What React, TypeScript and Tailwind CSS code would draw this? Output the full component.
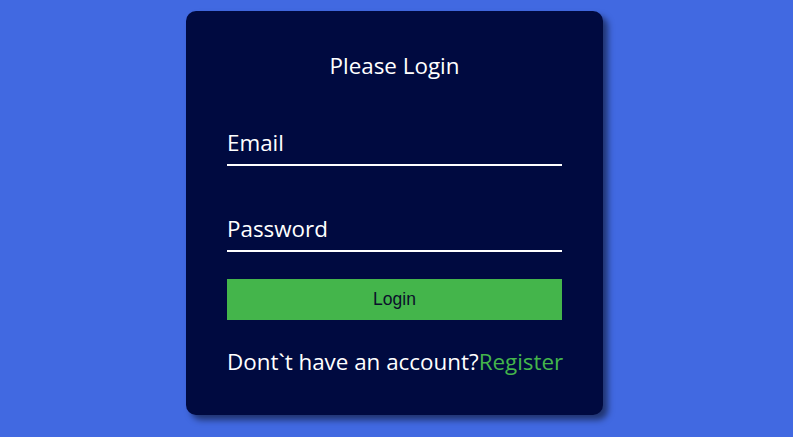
import React from "react";

export default function App() {
  return (
    <div
      className="min-h-screen w-full bg-[#4169e1] flex justify-center pr-[4px] pt-[11px]"
      style={{ fontFamily: '"Open Sans", "Noto Sans", sans-serif' }}
    >
      <div className="w-[417px] h-[404px] bg-[#000a40] rounded-[10px] shadow-[5px_5px_6px_rgba(0,0,0,0.5)] px-[41px] pt-[40px] flex flex-col">
        <h2 className="text-center text-white text-[22.4px] leading-[30px] font-normal">Please Login</h2>
        <div className="mt-[47px] border-b-2 border-white pb-[6px]">
          <div className="text-white text-[22.4px] leading-[30px]">Email</div>
        </div>
        <div className="mt-[48px] border-b-2 border-white pb-[6px]">
          <div className="text-white text-[22.4px] leading-[30px]">Password</div>
        </div>
        <button
          className="mt-[27px] h-[41px] w-full bg-[#44b54b] text-[#0a0f2a] text-[17.5px]"
          style={{ fontFamily: '"Liberation Sans", Arial, sans-serif' }}
        >
          Login
        </button>
        <p className="mt-[27px] text-white text-[22.4px] leading-[30px] whitespace-nowrap">
          Dont`t have an account?<span className="text-[#44b54b]">Register</span>
        </p>
      </div>
    </div>
  );
}
